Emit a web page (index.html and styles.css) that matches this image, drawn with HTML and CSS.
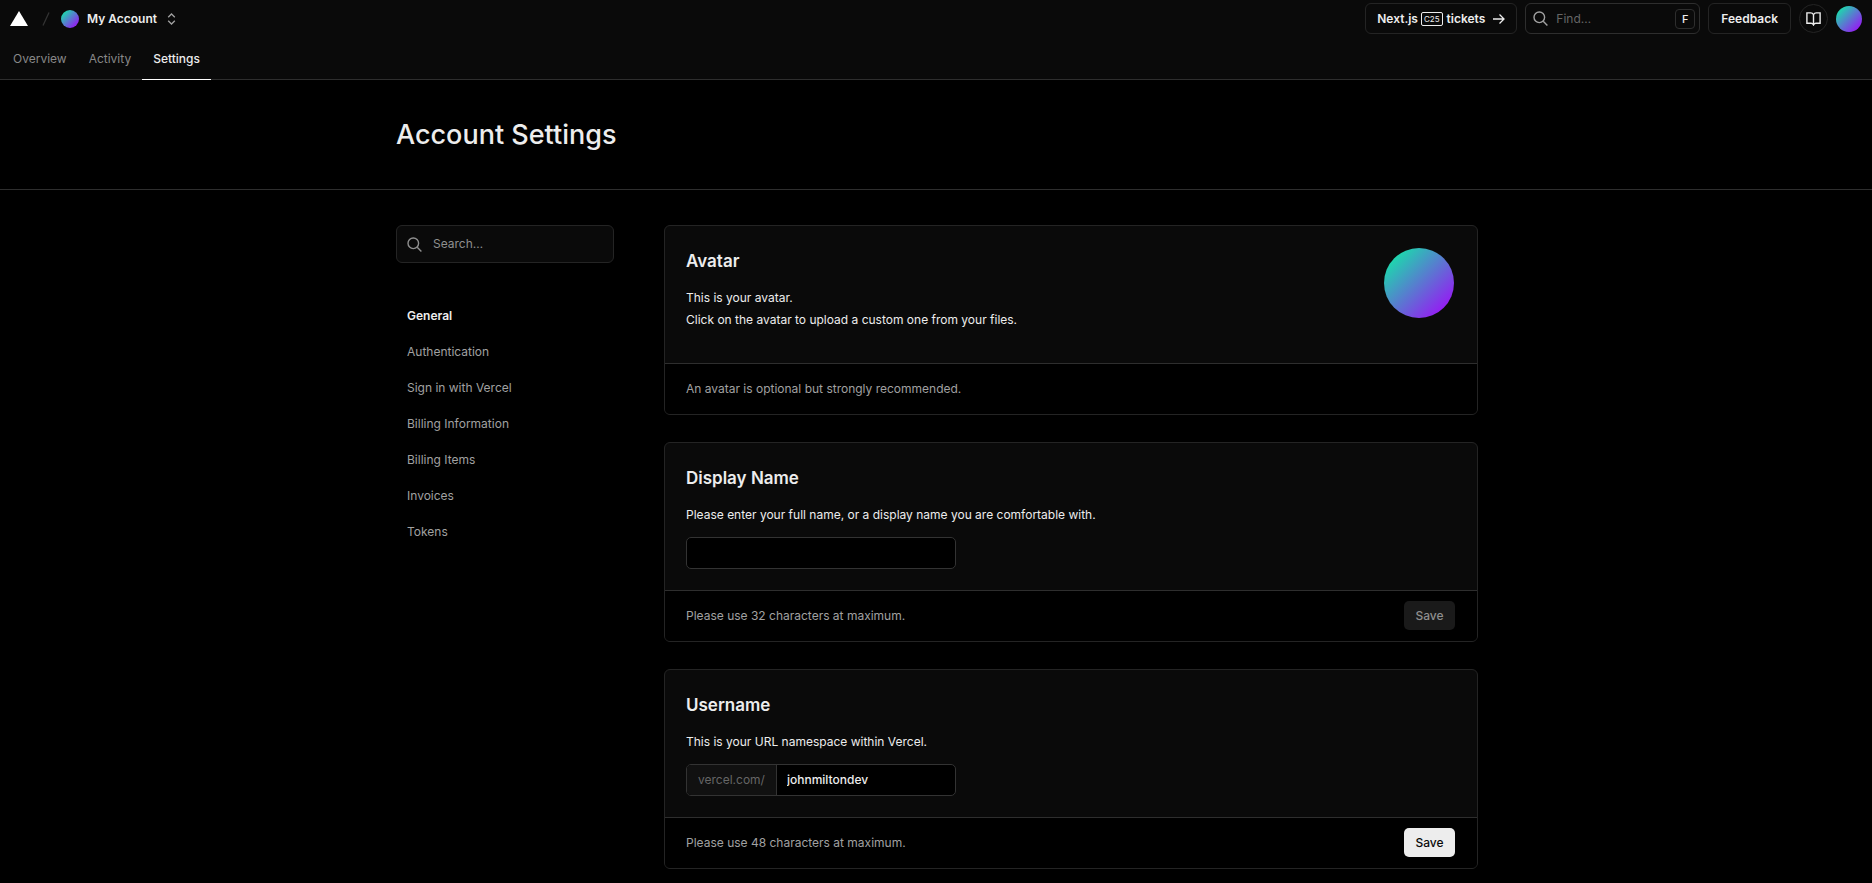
FILE: index.html
```html
<!DOCTYPE html>
<html lang="en">
<head>
<meta charset="utf-8">
<meta name="viewport" content="width=device-width, initial-scale=1">
<title>Account Settings</title>
<link rel="stylesheet" href="styles.css">
</head>
<body>
<header class="topbar">
  <div class="topbar-row">
    <a class="logo" href="#" aria-label="Home"><svg width="18" height="15" viewBox="0 0 18 15"><path d="M9 0l9 15H0z" fill="#fff"/></svg></a>
    <svg class="slash" width="8" height="14" viewBox="0 0 8 14"><path d="M7 .5L1 13.500" stroke="#333" stroke-width="1.300" fill="none"/></svg>
    <a class="account" href="#"><span class="avatar avatar-small"></span>My Account</a>
    <button class="switcher" type="button" aria-label="Switch account"><svg width="9" height="12" viewBox="0 0 9 12"><path d="M1.200 4.200L4.500 1l3.300 3.200M1.200 7.800L4.500 11l3.300-3.200" stroke="#a1a1a1" stroke-width="1.300" fill="none"/></svg></button>
    <div class="actions">
      <a class="button tickets" href="#">Next.js <span class="badge">C25</span> tickets
        <svg class="arrow" width="12" height="12" viewBox="0 0 12 12"><path d="M0 6h11M6.500 1.500L11 6l-4.500 4.500" stroke="#ededed" stroke-width="1.300" fill="none"/></svg></a>
      <label class="find">
        <svg width="15" height="15" viewBox="0 0 15 15"><circle cx="6.300" cy="6.300" r="5.300" stroke="#a1a1a1" stroke-width="1.400" fill="none"/><path d="M10.200 10.200l4.200 4.200" stroke="#a1a1a1" stroke-width="1.400"/></svg>
        <input type="text" placeholder="Find…" aria-label="Find">
        <kbd>F</kbd>
      </label>
      <button class="button feedback" type="button">Feedback</button>
      <button class="docs" type="button" aria-label="Docs"><svg width="15" height="14" viewBox="0 0 15 14"><path d="M7.500 2.700C6.900 1.500 6 .9 4.700.9H.9v10.400h4.200c1.100 0 1.900.6 2.400 1.600.5-1 1.300-1.600 2.400-1.600h4.200V.9h-3.800C9 .9 8.100 1.500 7.500 2.700zM7.500 2.700v10" stroke="#ededed" stroke-width="1.400" fill="none"/></svg></button>
      <button class="avatar avatar-medium" type="button" aria-label="Profile menu"></button>
    </div>
  </div>
  <nav class="tabs" aria-label="Sections">
    <a href="#">Overview</a>
    <a href="#">Activity</a>
    <a href="#" class="active" aria-current="page">Settings</a>
  </nav>
</header>

<div class="page-head">
  <div class="container"><h1>Account Settings</h1></div>
</div>

<div class="container layout">
  <aside class="sidebar">
    <label class="search">
      <svg width="15" height="15" viewBox="0 0 15 15"><circle cx="6.300" cy="6.300" r="5.300" stroke="#8f8f8f" stroke-width="1.400" fill="none"/><path d="M10.200 10.200l4.200 4.200" stroke="#8f8f8f" stroke-width="1.400"/></svg>
      <input type="text" placeholder="Search…" aria-label="Search settings">
    </label>
    <nav class="side-nav" aria-label="Settings">
      <a href="#" class="active" aria-current="page">General</a>
      <a href="#">Authentication</a>
      <a href="#">Sign in with Vercel</a>
      <a href="#">Billing Information</a>
      <a href="#">Billing Items</a>
      <a href="#">Invoices</a>
      <a href="#">Tokens</a>
    </nav>
  </aside>

  <main class="cards">
    <section class="card">
      <div class="card-body split">
        <div>
          <h2>Avatar</h2>
          <p>This is your avatar.<br>Click on the avatar to upload a custom one from your files.</p>
        </div>
        <button class="avatar avatar-large" type="button" aria-label="Upload avatar"></button>
      </div>
      <footer class="card-foot"><span>An avatar is optional but strongly recommended.</span></footer>
    </section>

    <section class="card">
      <div class="card-body">
        <h2>Display Name</h2>
        <p><label for="display-name">Please enter your full name, or a display name you are comfortable with.</label></p>
        <div class="field"><input id="display-name" type="text" maxlength="32"></div>
      </div>
      <footer class="card-foot"><span>Please use 32 characters at maximum.</span><button class="save" type="button" disabled>Save</button></footer>
    </section>

    <section class="card">
      <div class="card-body">
        <h2>Username</h2>
        <p><label for="username">This is your URL namespace within Vercel.</label></p>
        <div class="field"><span class="prefix">vercel.com/</span><input id="username" type="text" value="johnmiltondev" maxlength="48"></div>
      </div>
      <footer class="card-foot"><span>Please use 48 characters at maximum.</span><button class="save" type="button">Save</button></footer>
    </section>
  </main>
</div>
</body>
</html>
```

FILE: styles.css
```css
* { box-sizing: border-box; }

body {
  margin: 0;
  background: #000;
  color: #ededed;
  font: 12px/22px Inter, "Liberation Sans", sans-serif;
}

a { color: inherit; text-decoration: none; }
button, input { font: inherit; color: inherit; }
button { padding: 0; border: 0; background: none; cursor: pointer; }
input { min-width: 0; padding: 0; border: 0; background: none; outline: 0; }
svg { display: block; flex: none; }
h1, h2, p { margin: 0; }

.topbar { background: #0a0a0a; border-bottom: 1px solid #2e2e2e; }
.topbar-row { display: flex; align-items: center; height: 37px; padding: 0 10px; }
.slash { margin: 0 11px 0 14px; }
.account { display: flex; align-items: center; gap: 8px; font-weight: 600; }
.switcher { margin-left: 10px; }

.avatar { flex: none; display: block; border-radius: 50%; background: linear-gradient(135deg, #14e6a8 8%, #9719f4 88%); }
.avatar-small { width: 18px; height: 18px; }
.avatar-medium { width: 26px; height: 26px; }
.avatar-large { width: 70px; height: 70px; }

.actions { display: flex; align-items: center; gap: 8px; margin-left: auto; }
.button {
  display: flex; align-items: center;
  height: 31px; padding: 0 12px;
  border: 1px solid #242424; border-radius: 6px;
  font-weight: 600;
}
.tickets { padding: 0 11px; }
.badge {
  margin: 0 4px 0 3px; padding: 0 2px;
  border: 1px solid #ededed; border-radius: 2px;
  font-size: 8px; font-weight: 400; line-height: 12px;
}
.arrow { margin-left: 8px; }
.find {
  display: flex; align-items: center; gap: 8px;
  width: 175px; height: 31px; padding: 0 4px 0 7px;
  border: 1px solid #2e2e2e; border-radius: 6px;
}
.find input { flex: 1; }
.find input::placeholder { color: #666; opacity: 1; }
kbd {
  width: 20px; height: 20px;
  border: 1px solid #2e2e2e; border-radius: 4px;
  font: 500 11px/18px Inter, sans-serif; text-align: center;
}
.docs { display: grid; place-items: center; width: 29px; height: 29px; border: 1px solid #242424; border-radius: 50%; }

.tabs { display: flex; height: 43px; margin-bottom: -1px; padding-left: 2px; }
.tabs a { padding: 0 11px; line-height: 43px; color: #888; }
.tabs .active { color: #ededed; font-weight: 500; border-bottom: 1px solid #fff; }

.container { max-width: 1128px; margin: 0 auto; padding: 0 22px 0 24px; }
.page-head { border-bottom: 1px solid #2e2e2e; }
.page-head h1 { padding: 37px 0 36px; font-size: 27px; line-height: 36px; font-weight: 500; }

.layout { display: grid; grid-template-columns: 218px minmax(0, 1fr); gap: 50px; padding-top: 35px; padding-bottom: 13px; }
.search {
  display: flex; align-items: center; gap: 11px;
  height: 38px; padding: 0 10px;
  background: #0a0a0a; border: 1px solid #242424; border-radius: 6px;
}
.search input { flex: 1; }
.search input::placeholder { color: #8f8f8f; opacity: 1; }
.side-nav { display: flex; flex-direction: column; margin-top: 35px; }
.side-nav a { padding: 7px 11px; color: #a1a1a1; }
.side-nav .active { color: #ededed; font-weight: 600; }

.cards { display: flex; flex-direction: column; gap: 27px; }
.card { overflow: hidden; background: #0a0a0a; border: 1px solid #242424; border-radius: 6px; }
.card-body { padding: 22px 23px 21px 21px; }
.card h2 { margin-bottom: 12px; font-size: 17px; line-height: 27px; font-weight: 600; }
.card p { margin-bottom: 11px; }
.split { display: flex; justify-content: space-between; gap: 24px; }
.card-foot {
  display: flex; align-items: center; justify-content: space-between; gap: 24px;
  min-height: 51px; padding: 10px 22px 11px 21px;
  background: #000; border-top: 1px solid #2e2e2e; color: #a1a1a1;
}
.field {
  display: flex; overflow: hidden;
  width: 270px; max-width: 100%; height: 32px;
  background: #000; border: 1px solid #333; border-radius: 5px;
}
.field input { flex: 1; padding: 0 10px; font-weight: 500; }
.prefix { padding: 0 11px; background: #111; border-right: 1px solid #333; color: #666; line-height: 30px; }
.save { width: 51px; height: 29px; border-radius: 5px; background: #ededed; color: #0a0a0a; font-weight: 500; }
.save:disabled { background: #1a1a1a; color: #8f8f8f; cursor: default; }
```
